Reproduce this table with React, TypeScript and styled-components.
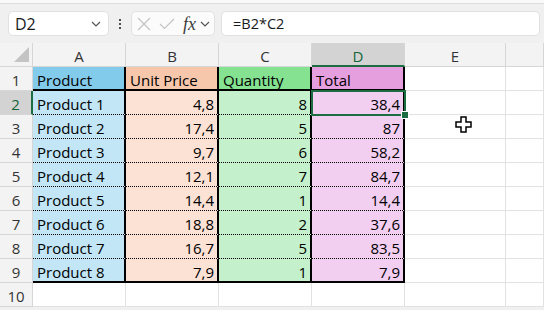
import React from 'react';
import styled, { createGlobalStyle } from 'styled-components';

const GlobalStyle = createGlobalStyle`
  html, body {
    margin: 0;
    padding: 0;
    background: #f0f0f0;
  }
  body {
    font-family: "Open Sans", "Liberation Sans", sans-serif;
    width: 544px;
    height: 310px;
    overflow: hidden;
  }
`;

const Page = styled.div`
  position: relative;
  display: flex;
  flex-direction: column;
  width: 544px;
  height: 310px;
  overflow: hidden;
  background: #f0f0f0;
`;

const RibbonEdge = styled.div`
  height: 3px;
  background: #f9f9f9;
  border-bottom: 1px solid #dcdcdc;
`;

const FormulaBar = styled.div`
  display: flex;
  align-items: center;
  box-sizing: border-box;
  height: 39px;
  padding: 0 4px 0 8px;
`;

const NameBox = styled.div`
  box-sizing: border-box;
  display: flex;
  align-items: center;
  justify-content: space-between;
  width: 101px;
  height: 25px;
  padding: 0 7px 0 6px;
  background: #ffffff;
  border: 1px solid #e1e1e1;
  border-radius: 5px;
  font-size: 16px;
  color: #1a1a1a;
`;

const Dots = styled.div`
  display: flex;
  flex-direction: column;
  align-items: center;
  justify-content: center;
  gap: 2px;
  width: 22px;
  height: 25px;
`;

const Dot = styled.span`
  width: 2px;
  height: 2px;
  background: #505050;
`;

const FxBox = styled.div`
  box-sizing: border-box;
  display: flex;
  align-items: center;
  width: 84px;
  height: 25px;
  padding: 0 0 0 5px;
  background: #fbfbfb;
  border: 1px solid #e1e1e1;
  border-radius: 5px;
`;

const FxIcon = styled.svg<{ $gap: number }>`
  flex: none;
  margin-right: ${p => p.$gap}px;
`;

const FxLabel = styled.span`
  font-family: "Liberation Serif", "DejaVu Serif", serif;
  font-style: italic;
  font-size: 18px;
  line-height: 18px;
  color: #3c3c3c;
  margin-right: 4px;
`;

const FormulaInput = styled.div`
  box-sizing: border-box;
  flex: 1;
  display: flex;
  align-items: center;
  height: 25px;
  margin-left: 6px;
  padding: 0 0 0 11px;
  background: #ffffff;
  border: 1px solid #e1e1e1;
  border-radius: 5px;
  font-size: 14.5px;
  color: #1a1a1a;
`;

const Sheet = styled.div`
  position: relative;
  display: grid;
  grid-template-columns: 33px 93px 93px 93px 93px 101px 1fr;
  grid-auto-rows: 24px;
  background: #ffffff;
  font-size: 15px;
  color: #000000;
`;

const Corner = styled.div`
  position: relative;
  box-sizing: border-box;
  display: flex;
  align-items: flex-end;
  justify-content: flex-end;
  padding: 0 3px 4px 0;
  background: #f3f3f3;
  border-right: 1px solid #d6d6d6;
  border-bottom: 1px solid #d6d6d6;
`;

const ColHeader = styled.div<{ $selected?: boolean }>`
  box-sizing: border-box;
  padding-top: 3px;
  line-height: 20px;
  text-align: center;
  background: ${p => (p.$selected ? '#d3d3d3' : '#f3f3f3')};
  color: ${p => (p.$selected ? '#13653a' : '#333333')};
  border-right: 1px solid #d6d6d6;
  border-bottom: ${p => (p.$selected ? '2px solid #1d6d42' : '1px solid #d6d6d6')};
`;

const RowHeader = styled.div<{ $selected?: boolean }>`
  box-sizing: border-box;
  padding-top: 3px;
  line-height: 20px;
  text-align: center;
  background: ${p => (p.$selected ? '#d3d3d3' : '#f3f3f3')};
  color: ${p => (p.$selected ? '#13653a' : '#333333')};
  border-right: ${p => (p.$selected ? '2px solid #1d6d42' : '1px solid #d6d6d6')};
  border-bottom: 1px solid #d6d6d6;
`;

type Bottom = 'grid' | 'dotted' | 'thick';

const Cell = styled.div<{
  $bg?: string;
  $right?: boolean;
  $thickRight?: boolean;
  $bottom?: Bottom;
}>`
  position: relative;
  box-sizing: border-box;
  padding: 3px ${p => (p.$right ? '3px' : '4px')} 0 4px;
  line-height: 20px;
  white-space: nowrap;
  text-align: ${p => (p.$right ? 'right' : 'left')};
  background: ${p => p.$bg ?? '#ffffff'};
  border-right: ${p => (p.$thickRight ? '2px solid #000000' : '1px solid #e1e1e1')};
  border-bottom: ${p =>
    p.$bottom === 'thick'
      ? '2px solid #000000'
      : p.$bottom === 'dotted'
      ? '1px dotted #000000'
      : '1px solid #e1e1e1'};
`;

const Selection = styled.div`
  position: absolute;
  top: -1px;
  left: -1px;
  right: -3px;
  bottom: -2px;
  border: 2px solid #1d6d42;
  pointer-events: none;
  z-index: 2;
`;

const FillHandle = styled.div`
  position: absolute;
  right: -5px;
  bottom: -5px;
  width: 6px;
  height: 6px;
  background: #1d6d42;
  border: 1px solid #ffffff;
  z-index: 3;
`;

const Cursor = styled.svg`
  position: absolute;
  left: 455px;
  top: 73px;
  z-index: 4;
`;

const headerColors = ['#83cbeb', '#f7c7ac', '#85e291', '#e59ede'];
const dataColors = ['#c2e6f6', '#fbe2d5', '#c4f0cb', '#f2cef0'];
const headers = ['Product', 'Unit Price', 'Quantity', 'Total'];

const rows: string[][] = [
  ['Product 1', '4,8', '8', '38,4'],
  ['Product 2', '17,4', '5', '87'],
  ['Product 3', '9,7', '6', '58,2'],
  ['Product 4', '12,1', '7', '84,7'],
  ['Product 5', '14,4', '1', '14,4'],
  ['Product 6', '18,8', '2', '37,6'],
  ['Product 7', '16,7', '5', '83,5'],
  ['Product 8', '7,9', '1', '7,9'],
];

const Chevron: React.FC = () => (
  <svg width="10" height="6" viewBox="0 0 10 6">
    <polyline points="1,1 5,5 9,1" fill="none" stroke="#555" strokeWidth="1.2" />
  </svg>
);

export default function App() {
  return (
    <Page>
      <GlobalStyle />
      <RibbonEdge />
      <FormulaBar>
        <NameBox>
          <span>D2</span>
          <Chevron />
        </NameBox>
        <Dots>
          <Dot />
          <Dot />
          <Dot />
        </Dots>
        <FxBox>
          <FxIcon $gap={8} width="14" height="14" viewBox="0 0 14 14">
            <path d="M1 1 L13 13 M13 1 L1 13" stroke="#c4c4c4" strokeWidth="1.2" fill="none" />
          </FxIcon>
          <FxIcon $gap={8} width="16" height="12" viewBox="0 0 16 12">
            <polyline points="1,6 5.5,10.5 15,1" stroke="#c4c4c4" strokeWidth="1.2" fill="none" />
          </FxIcon>
          <FxLabel>fx</FxLabel>
          <Chevron />
        </FxBox>
        <FormulaInput>=B2*C2</FormulaInput>
      </FormulaBar>
      <Sheet>
        <Corner>
          <svg width="15" height="15" viewBox="0 0 15 15">
            <polygon points="15,0 15,15 0,15" fill="#c4c4c4" />
          </svg>
        </Corner>
        {['A', 'B', 'C', 'D', 'E', ''].map(l => (
          <ColHeader key={l || 'F'} $selected={l === 'D'}>
            {l}
          </ColHeader>
        ))}

        <RowHeader>1</RowHeader>
        {headers.map((h, i) => (
          <Cell key={h} $bg={headerColors[i]} $thickRight={true} $bottom="thick">
            {h}
          </Cell>
        ))}
        <Cell />
        <Cell />

        {rows.map((r, ri) => {
          const rowNum = ri + 2;
          const last = ri === rows.length - 1;
          return (
            <React.Fragment key={rowNum}>
              <RowHeader $selected={rowNum === 2}>{rowNum}</RowHeader>
              {r.map((v, ci) => (
                <Cell
                  key={ci}
                  $bg={dataColors[ci]}
                  $right={ci > 0}
                  $thickRight={true}
                  $bottom={last ? 'thick' : 'dotted'}
                >
                  {v}
                  {rowNum === 2 && ci === 3 && (
                    <Selection>
                      <FillHandle />
                    </Selection>
                  )}
                </Cell>
              ))}
              <Cell />
              <Cell />
            </React.Fragment>
          );
        })}

        <RowHeader>10</RowHeader>
        {[0, 1, 2, 3, 4, 5].map(i => (
          <Cell key={i} />
        ))}

        <Cursor width="17" height="17" viewBox="0 0 17 17">
          <polygon
            points="6,1 11,1 11,6 16,6 16,11 11,11 11,16 6,16 6,11 1,11 1,6 6,6"
            fill="#ffffff"
            stroke="#000000"
            strokeWidth="1.5"
          />
        </Cursor>
      </Sheet>
    </Page>
  );
}
